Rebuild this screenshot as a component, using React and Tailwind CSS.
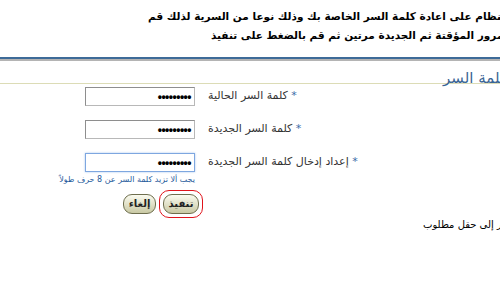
export default function App() {
  const fields = [
    { label: "كلمة السر الحالية", focus: false },
    { label: "كلمة السر الجديدة", focus: false },
    { label: "إعداد إدخال كلمة السر الجديدة", focus: true },
  ];

  return (
    <div className="w-[500px] h-[300px] overflow-hidden bg-white text-black font-['DejaVu_Sans',sans-serif]">
      {/* instruction text, cut off on the right */}
      <div className="pt-[8px] flex flex-col gap-[3px] text-[10.5px] font-bold leading-[16px]">
        <div className="pl-[148px]">
          <span dir="rtl" className="whitespace-nowrap">
            سيجبرك النظام على اعادة كلمة السر الخاصة بك وذلك نوعا من السرية لذلك قم
          </span>
        </div>
        <div className="pl-[211px]">
          <span dir="rtl" className="whitespace-nowrap">
            بإدخال كلمة المرور المؤقتة ثم الجديدة مرتين ثم قم بالضغط على تنفيذ
          </span>
        </div>
      </div>

      {/* separator bar */}
      <div className="mt-[14px] h-[2px] bg-[#3d6b98]" />
      <div className="h-[2px] bg-[#b4b4b4]" />

      {/* section title */}
      <div className="pl-[443px] pt-[5px] h-[23px] border-b border-[#dcdcb6]">
        <span dir="rtl" className="whitespace-nowrap text-[15px] leading-[18px] text-[#3a6494]">
          كلمة السر
        </span>
      </div>

      {/* form rows */}
      <div className="pt-[3px] flex flex-col gap-[14px]">
        {fields.map((f) => (
          <div key={f.label} className="flex items-center pl-[85px]">
            <div
              className={
                f.focus
                  ? "w-[110px] h-[19px] border border-[#7ea7e0] shadow-[0_0_2px_#a9c6ee] bg-white flex items-center justify-end pr-[3px]"
                  : "w-[110px] h-[19px] border border-[#b8b8b8] border-t-[#8e8e8e] border-l-[#8e8e8e] bg-white flex items-center justify-end pr-[3px]"
              }
            >
              <span className="font-['Liberation_Sans',sans-serif] font-bold text-[12px] leading-none tracking-[-0.5px]">
                •••••••••
              </span>
            </div>
            <span dir="rtl" className="ml-[13px] whitespace-nowrap text-[11px] text-[#333333]">
              <span className="text-[#3a6ea8]">*</span> {f.label}
            </span>
          </div>
        ))}
      </div>

      {/* hint */}
      <div className="w-[195px] flex justify-end mt-[2px]">
        <span dir="rtl" className="whitespace-nowrap text-[8px] leading-[12px] text-[#24599a]">
          يجب ألا تزيد كلمة السر عن 8 حرف طولاً
        </span>
      </div>

      {/* buttons */}
      <div className="flex items-center pl-[123px] mt-[4px] gap-[3px]">
        <button className="h-[20px] w-[33px] rounded-[9px] border border-[#6e6e4e] bg-gradient-to-b from-[#fbfbf0] to-[#c9c9a4] text-[10px] font-bold text-[#222] leading-none">
          إلغاء
        </button>
        <div className="rounded-[10px] border-[1.5px] border-[#e0141c] p-[3px]">
          <button className="h-[20px] w-[36px] rounded-[9px] border border-[#6e6e4e] bg-gradient-to-b from-[#fbfbf0] to-[#c9c9a4] text-[10px] font-bold text-[#222] leading-none block">
            تنفيذ
          </button>
        </div>
      </div>

      {/* required note */}
      <div className="pl-[423px] -mt-[7px]">
        <span dir="rtl" className="whitespace-nowrap text-[10px] leading-[14px]">
          * تشير إلى حقل مطلوب
        </span>
      </div>
    </div>
  );
}
